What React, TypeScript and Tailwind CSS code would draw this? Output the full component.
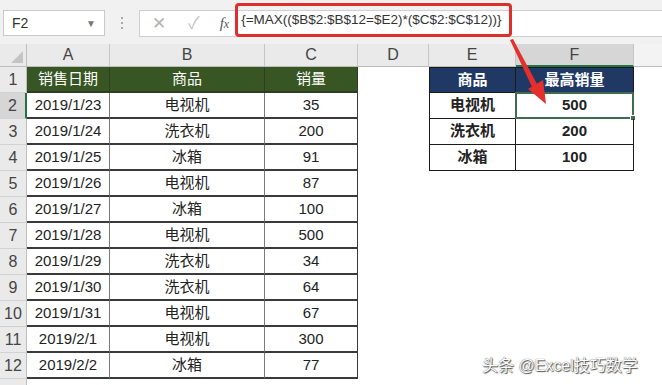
const sales = [
  ["2019/1/23", "电视机", "35"],
  ["2019/1/24", "洗衣机", "200"],
  ["2019/1/25", "冰箱", "91"],
  ["2019/1/26", "电视机", "87"],
  ["2019/1/27", "冰箱", "100"],
  ["2019/1/28", "电视机", "500"],
  ["2019/1/29", "洗衣机", "34"],
  ["2019/1/30", "洗衣机", "64"],
  ["2019/1/31", "电视机", "67"],
  ["2019/2/1", "电视机", "300"],
  ["2019/2/2", "冰箱", "77"],
];

const summary = [
  ["电视机", "500"],
  ["洗衣机", "200"],
  ["冰箱", "100"],
];

const colHeads = ["A", "B", "C", "D", "E", "F"];

function RowHead({ n, label = true }: { n: number; label?: boolean }) {
  const selected = n === 2;
  return (
    <div
      className={
        "flex h-[26px] items-center justify-center border-b border-[#d2d2d2] text-[16px] text-[#444] " +
        (selected ? "border-r-2 border-r-[#217346] bg-[#d6d6d6]" : "border-r border-r-[#bdbdbd] bg-[#eaeaea]")
      }
    >
      {label ? n : null}
    </div>
  );
}

export default function App() {
  return (
    <div className="relative h-[385px] w-[662px] overflow-hidden bg-white font-['Liberation_Sans','Noto_Sans_CJK_SC',sans-serif] text-[#222]">
      {/* formula bar */}
      <div className="flex h-[44px] items-start bg-[#f1f1f1]">
        <div className="ml-[3px] mt-[10px] flex h-[26px] w-[102px] items-center justify-between border border-[#c9c9c9] bg-white pl-[8px] pr-[8px] text-[14px] text-[#333]">
          <span>F2</span>
          <span className="text-[10px] text-[#7a7a7a]">▼</span>
        </div>
        <div className="mt-[17px] flex w-[34px] flex-col items-center gap-[3px]">
          <span className="h-[2px] w-[2px] bg-[#a8a8a8]" />
          <span className="h-[2px] w-[2px] bg-[#a8a8a8]" />
          <span className="h-[2px] w-[2px] bg-[#a8a8a8]" />
        </div>
        <div className="mt-[10px] flex h-[27px] flex-1 items-center border border-r-0 border-[#cfcfcf] bg-white">
          <span className="ml-[12px] text-[17px] leading-none text-[#b4b4b4]">✕</span>
          <span className="ml-[22px] text-[17px] leading-none text-[#c2c2c2]">✓</span>
          <span className="ml-[20px] font-['Liberation_Serif',serif] text-[15px] italic text-[#555]">
            f<span className="text-[12px]">x</span>
          </span>
          <div className="-mt-[8px] ml-[6px] flex h-[34px] w-[277px] items-center self-start whitespace-nowrap rounded-[4px] border-[3px] border-[#dc2f2c] pl-[3px] text-[13.5px] text-[#333]">
            {"{=MAX(($B$2:$B$12=$E2)*($C$2:$C$12))}"}
          </div>
        </div>
      </div>

      {/* sheet */}
      <div className="grid grid-cols-[27px_83px_155px_93px_71px_87px_118px_1fr]">
        <div className="relative h-[23px] border-b border-r border-[#bdbdbd] bg-[#eaeaea]">
          <div className="absolute bottom-[3px] right-[3px] h-0 w-0 border-b-[12px] border-l-[12px] border-b-[#c4c4c4] border-l-transparent" />
        </div>
        {colHeads.map((c) => (
          <div
            key={c}
            className={
              "flex h-[23px] items-center justify-center border-r border-[#c6c6c6] text-[16px] text-[#444] " +
              (c === "F" ? "border-b-2 border-b-[#217346] bg-[#d6d6d6]" : "border-b border-b-[#bdbdbd] bg-[#eaeaea]")
            }
          >
            {c}
          </div>
        ))}
        <div className="h-[23px] border-b border-[#bdbdbd] bg-[#f3f3f3]" />

        {/* row 1 */}
        <RowHead n={1} />
        <div className="flex h-[26px] items-center justify-center border-b-2 border-r border-[#2f3d26] bg-[#375623] text-[15px] text-white">销售日期</div>
        <div className="flex h-[26px] items-center justify-center border-b-2 border-r border-[#2f3d26] bg-[#375623] text-[15px] text-white">商品</div>
        <div className="flex h-[26px] items-center justify-center border-b-2 border-r border-[#2f3d26] bg-[#375623] text-[15px] text-white">销量</div>
        <div className="h-[26px]" />
        <div className="flex h-[26px] items-center justify-center border border-[#1a1a1a] bg-[#203864] text-[15px] font-bold text-white">商品</div>
        <div className="flex h-[26px] items-center justify-center border-y border-r border-[#1a1a1a] bg-[#203864] text-[15px] font-bold text-white">最高销量</div>
        <div className="h-[26px]" />

        {sales.map((row, i) => {
          const n = i + 2;
          const sum = summary[i];
          return (
            <div key={n} className="contents">
              <RowHead n={n} />
              <div className="flex h-[26px] items-center justify-center border-b-2 border-r border-b-[#3a3a3a] border-r-[#7a7a7a] text-[15px]">{row[0]}</div>
              <div className="flex h-[26px] items-center justify-center border-b-2 border-r border-b-[#3a3a3a] border-r-[#7a7a7a] text-[15px]">{row[1]}</div>
              <div className="flex h-[26px] items-center justify-center border-b-2 border-r border-b-[#3a3a3a] border-r-[#3a3a3a] text-[15px]">{row[2]}</div>
              <div className="h-[26px]" />
              {sum ? (
                <>
                  <div className="flex h-[26px] items-center justify-center border-x border-b border-[#1a1a1a] text-[15px] font-bold">{sum[0]}</div>
                  <div className="relative flex h-[26px] items-center justify-center border-b border-r border-[#1a1a1a] text-[15px] font-bold">
                    {sum[1]}
                    {n === 2 && (
                      <div className="absolute -left-px -top-px h-[27px] w-[119px] border-2 border-[#3f6b52]">
                        <div className="absolute -bottom-[4px] -right-[4px] h-[6px] w-[6px] border border-white bg-[#3f6b52]" />
                      </div>
                    )}
                  </div>
                </>
              ) : (
                <>
                  <div className="h-[26px]" />
                  <div className="h-[26px]" />
                </>
              )}
              <div className="h-[26px]" />
            </div>
          );
        })}

        <RowHead n={13} label={false} />
      </div>

      {/* annotation arrow */}
      <svg className="pointer-events-none absolute left-0 top-0" width="662" height="385" viewBox="0 0 662 385">
        <polygon points="510,40 513,39 538,86 533,89" fill="#e3302c" />
        <polygon points="546,104 528,89 543,80" fill="#e3302c" />
      </svg>

      {/* watermark */}
      <div className="absolute left-[482px] top-[354px] text-[16px] text-white [text-shadow:0_0_1px_#333,1px_1px_1px_#555]">
        头条 @Excel技巧数学
      </div>
    </div>
  );
}
